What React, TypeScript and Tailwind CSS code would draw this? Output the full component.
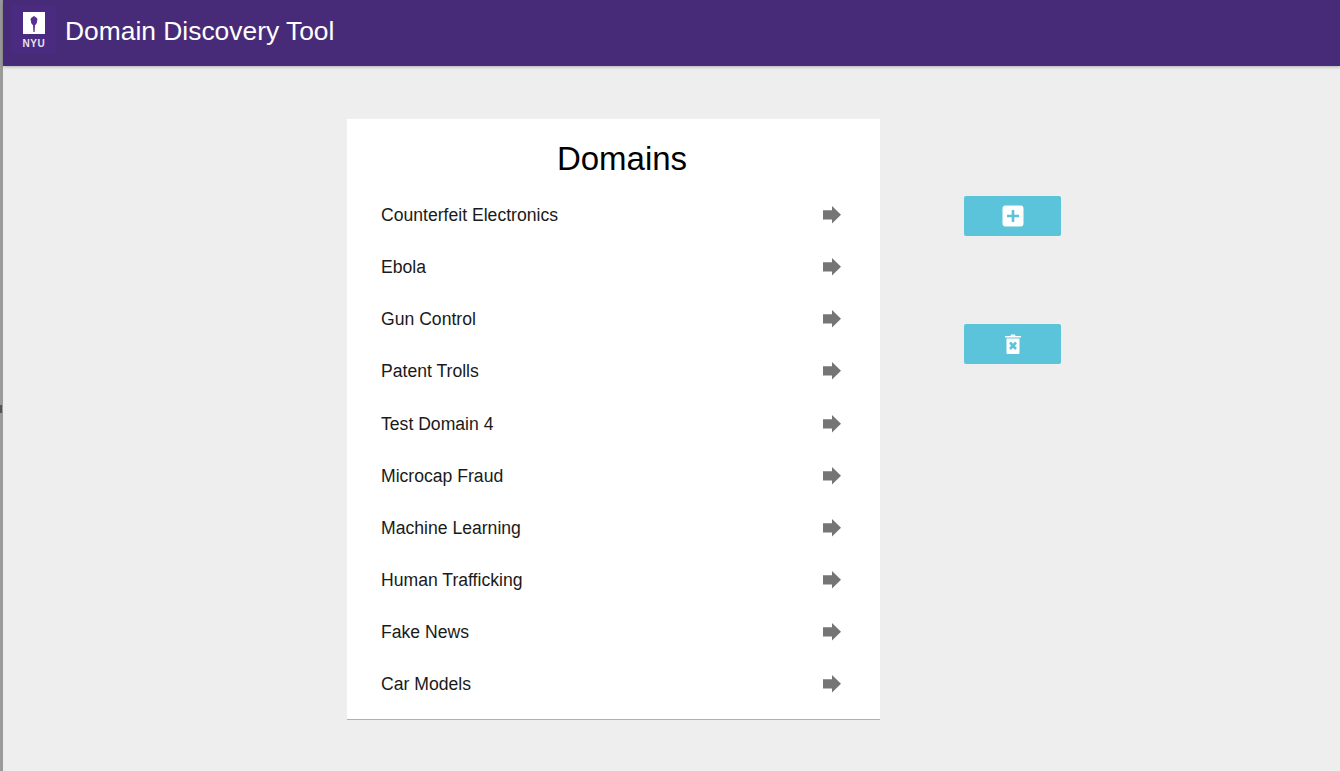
const domains = [
  "Counterfeit Electronics",
  "Ebola",
  "Gun Control",
  "Patent Trolls",
  "Test Domain 4",
  "Microcap Fraud",
  "Machine Learning",
  "Human Trafficking",
  "Fake News",
  "Car Models",
];

function Arrow() {
  return (
    <svg width="18" height="18" viewBox="0 0 18 18" className="block">
      <path d="M0 4.2H9V0L18 8.7L9 17.4V13.4H0Z" fill="#757575" />
    </svg>
  );
}

function Logo() {
  return (
    <div className="flex h-[49px] w-[44px] flex-col items-center bg-[#4b2a82] pt-[7px]">
      <div className="h-[22px] w-[22px] bg-white">
        <svg width="22" height="22" viewBox="0 0 22 22" className="block">
          <path
            d="M11 4C12 4.5 12.5 5 13 5.5C14.5 6 14.8 7.5 14 9C14.3 10.5 13 12.5 12 13L11.6 20H10.4L10 13C9 12.5 7.7 10.5 8 9C7.2 7.5 7.5 6 9 5.5C9.5 5 10 4.5 11 4Z"
            fill="#5b2f91"
          />
        </svg>
      </div>
      <div className="mt-[6px] text-[10px] leading-[8px] font-bold tracking-[0.6px] text-[#e9e2f2]">NYU</div>
    </div>
  );
}

export default function App() {
  return (
    <div className="relative flex h-[771px] w-[1340px] overflow-hidden bg-[#eeeeee] font-['Liberation_Sans',Arial,sans-serif]">
      <div className="w-[3px] shrink-0 bg-[#9a9a9a]" />
      <div className="absolute left-0 top-[405px] h-[8px] w-[2px] bg-[#555555]" />
      <div className="flex min-w-0 flex-1 flex-col">
        <header className="flex h-[66px] shrink-0 items-start bg-[#472b78] pl-[9px] pt-[5px] shadow-[0_1px_3px_rgba(0,0,0,0.25)]">
          <Logo />
          <h1 className="mt-[8px] ml-[9px] text-[26.4px] leading-[36px] font-normal text-white">Domain Discovery Tool</h1>
        </header>
        <main className="flex items-start pl-[344px] pt-[53px]">
          <section className="h-[601px] w-[533px] border-b border-[#b5a8cc] bg-white pb-2">
            <h2 className="pt-[20px] pl-[17px] text-center text-[33px] leading-[40px] font-normal text-black">Domains</h2>
            <ul className="mt-[10px]">
              {domains.map((d) => (
                <li key={d} className="flex h-[52.15px] items-center justify-between pl-[34px] pr-[39px]">
                  <span className="text-[17.6px] leading-[24px] text-[#1a1a1a]">{d}</span>
                  <Arrow />
                </li>
              ))}
            </ul>
          </section>
          <div className="ml-[84px] mt-[77px] flex flex-col gap-[88px]">
            <button className="flex h-[40px] w-[97px] items-center justify-center rounded-[2px] bg-[#5bc4da]">
              <svg width="22" height="22" viewBox="0 0 22 22">
                <rect x="0.5" y="0.5" width="21" height="21" rx="3" fill="#fff" />
                <path d="M11 5V17M5 11H17" stroke="#5bc4da" strokeWidth="2.6" />
              </svg>
            </button>
            <button className="flex h-[40px] w-[97px] items-center justify-center rounded-[2px] bg-[#5bc4da]">
              <svg width="18" height="22" viewBox="0 0 18 22">
                <path d="M1 3H6.5L7 1.5H11L11.5 3H17V4.5H1Z" fill="#fff" />
                <path d="M2.5 5.5H15.5V19.5C15.5 20.5 15 21 14 21H4C3 21 2.5 20.5 2.5 19.5Z" fill="#fff" />
                <path d="M6 9.5L12 16M12 9.5L6 16" stroke="#5bc4da" strokeWidth="2.6" />
              </svg>
            </button>
          </div>
        </main>
      </div>
    </div>
  );
}
